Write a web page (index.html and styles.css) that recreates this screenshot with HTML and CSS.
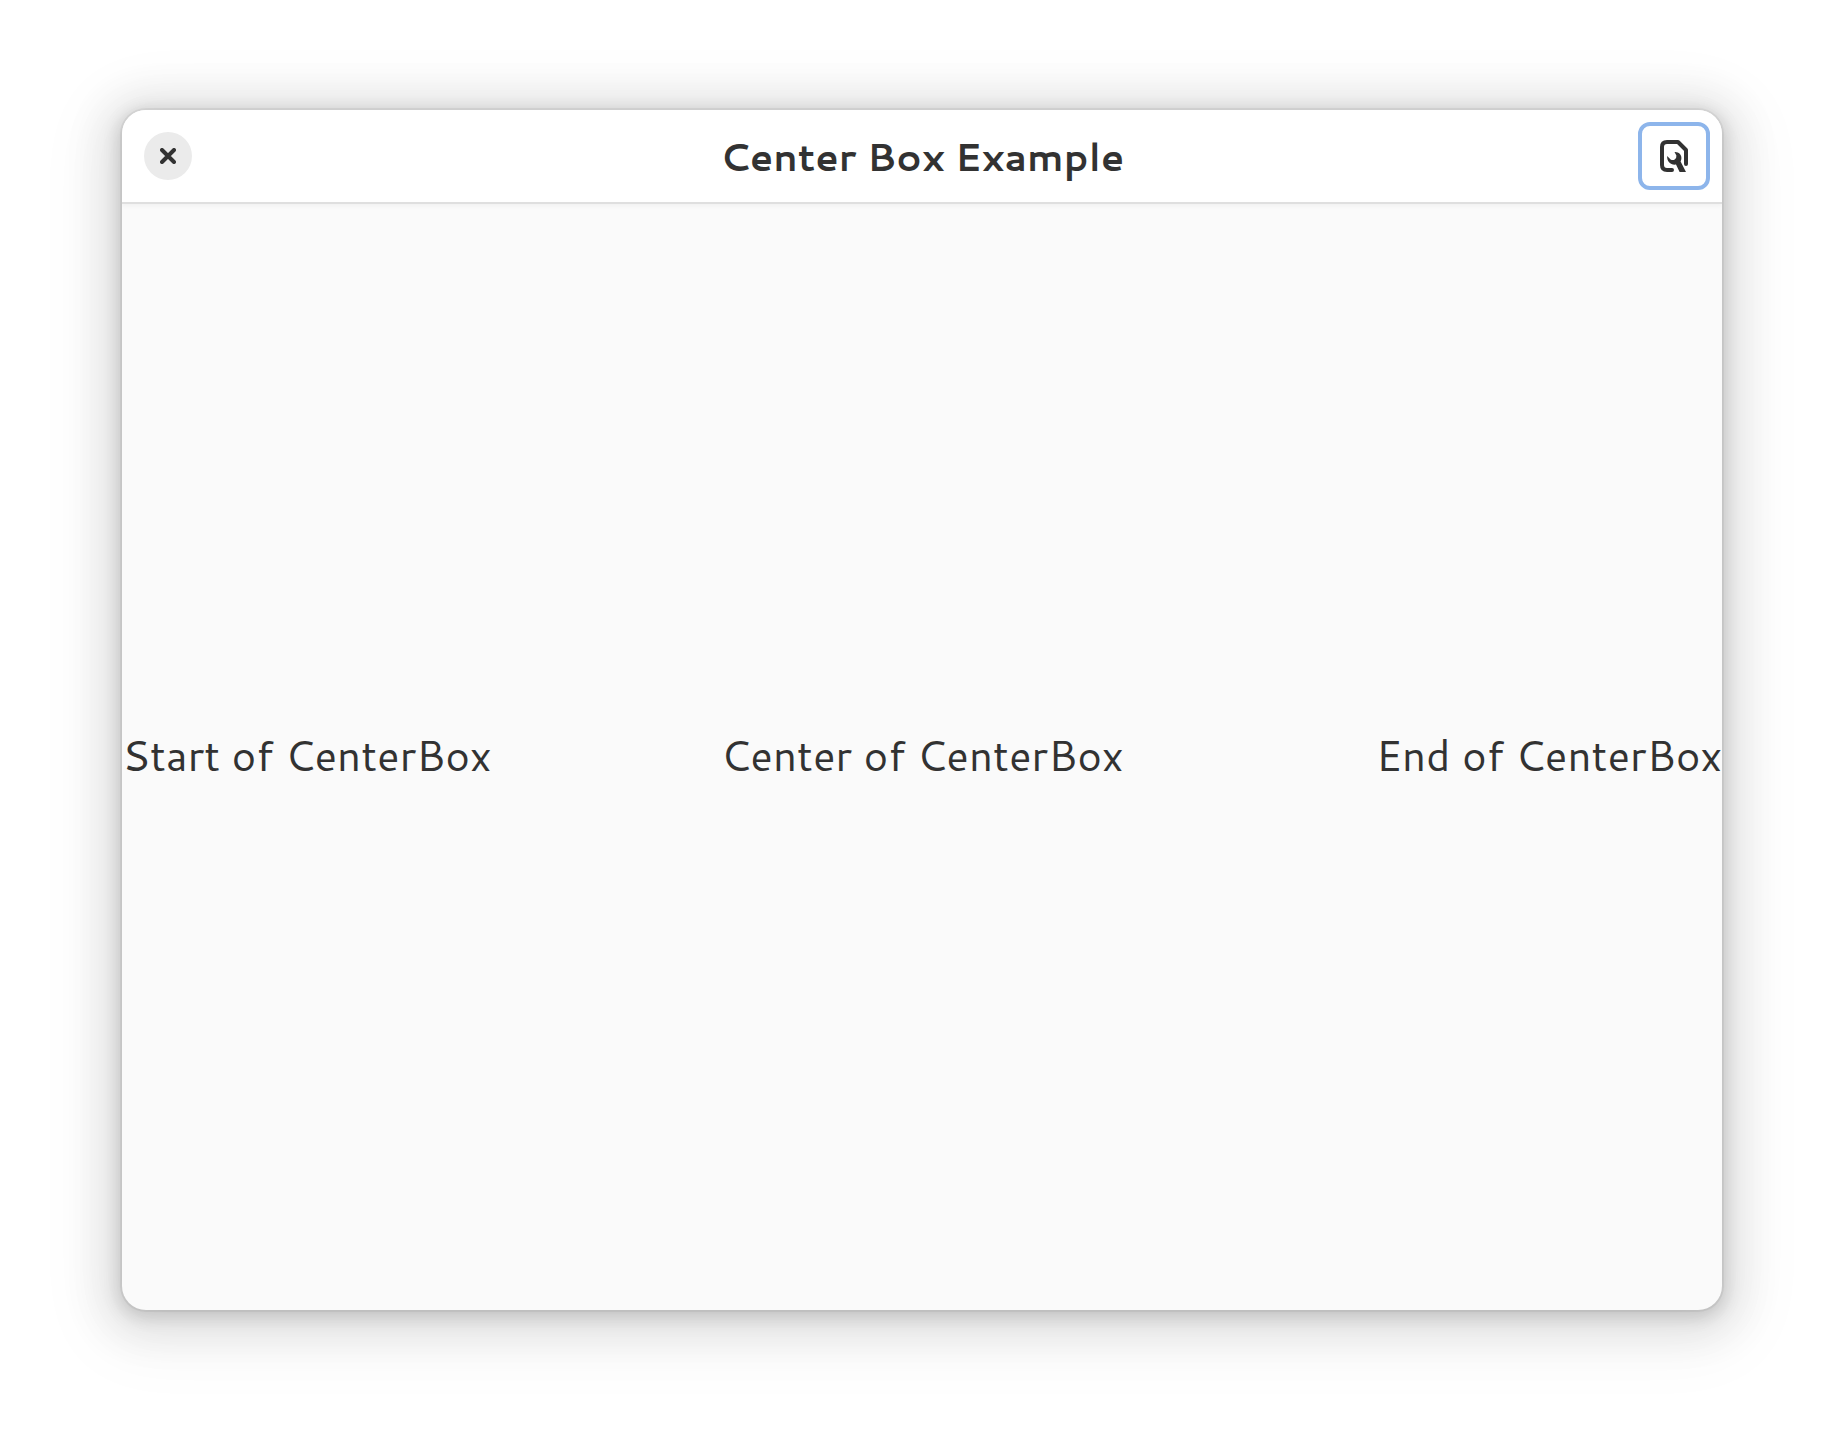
FILE: index.html
```html
<!DOCTYPE html>
<html lang="en">
<head>
  <meta charset="utf-8">
  <meta name="viewport" content="width=device-width, initial-scale=1">
  <title>Center Box Example</title>
  <link rel="stylesheet" href="styles.css">
</head>
<body>
  <div class="window">
    <header class="headerbar">
      <div class="headerbar-start">
        <button class="close-button" type="button" aria-label="Close">
          <svg width="16" height="16" viewBox="0 0 16 16" aria-hidden="true">
            <path d="M2 2 14 14M14 2 2 14" fill="none" stroke="currentColor" stroke-width="4" stroke-linecap="round"/>
          </svg>
        </button>
      </div>
      <h1 class="title">Center Box Example</h1>
      <div class="headerbar-end">
        <button class="tool-button" type="button" aria-label="Build settings">
          <svg width="32" height="32" viewBox="0 0 32 32" aria-hidden="true">
            <path d="M14 30H9Q4 30 4 25V7Q4 2 9 2H20L28 10V24" fill="none" stroke="currentColor" stroke-width="4" stroke-linecap="round" stroke-linejoin="round"/>
            <path d="M16.5 12C20.5 11.6 23.6 14.6 23.4 18C23.4 19.6 23 20.6 22.6 21.4L28 32H21.6L18 24.6C13 25.4 8.6 21.6 9.2 16L12.6 19.4Q14.4 20.6 16.4 19.8Q18.8 18.6 18.4 15.6Z" fill="currentColor"/>
          </svg>
        </button>
      </div>
    </header>
    <main class="center-box">
      <span class="start">Start of CenterBox</span>
      <span class="center">Center of CenterBox</span>
      <span class="end">End of CenterBox</span>
    </main>
  </div>
</body>
</html>
```
FILE: styles.css
```css
* {
  box-sizing: border-box;
}

body {
  display: flex;
  min-height: 100vh;
  margin: 0;
  padding: 110px 122px 134px;
  background: #fff;
  color: #323232;
  font-family: Cantarell, "Noto Sans", sans-serif;
  font-size: 42px;
  line-height: 56px;
}

.window {
  display: flex;
  flex: 1;
  flex-direction: column;
  overflow: hidden;
  border-radius: 24px;
  background: #fafafa;
  box-shadow:
    0 4px 16px 4px rgb(0 0 0 / 13%),
    0 6px 40px 20px rgb(0 0 0 / 9%),
    0 12px 64px 32px rgb(0 0 0 / 4%),
    0 0 0 2px rgb(0 0 0 / 5%);
}

.headerbar {
  display: grid;
  grid-template-columns: 1fr auto 1fr;
  align-items: center;
  height: 94px;
  padding: 0 12px;
  border-bottom: 2px solid #dfdfdf;
  background: #fff;
  box-shadow: 0 2px 4px rgb(0 0 0 / 4%);
}

.headerbar-start,
.headerbar-end {
  display: flex;
}

.headerbar-start {
  padding-left: 10px;
}

.headerbar-end {
  justify-content: flex-end;
}

.title {
  margin: 0;
  font-size: 38px;
  font-weight: 700;
  line-height: 56px;
}

button {
  display: flex;
  align-items: center;
  justify-content: center;
  padding: 0;
  color: inherit;
}

.close-button {
  width: 48px;
  height: 48px;
  border: 0;
  border-radius: 50%;
  background: #ebebeb;
}

.tool-button {
  width: 72px;
  height: 68px;
  border: 4px solid #8db5eb;
  border-radius: 12px;
  background: #fff;
}

.center-box {
  display: grid;
  flex: 1;
  grid-template-columns: 1fr auto 1fr;
  align-items: center;
  padding-bottom: 4px;
}

.end {
  text-align: right;
}
```
